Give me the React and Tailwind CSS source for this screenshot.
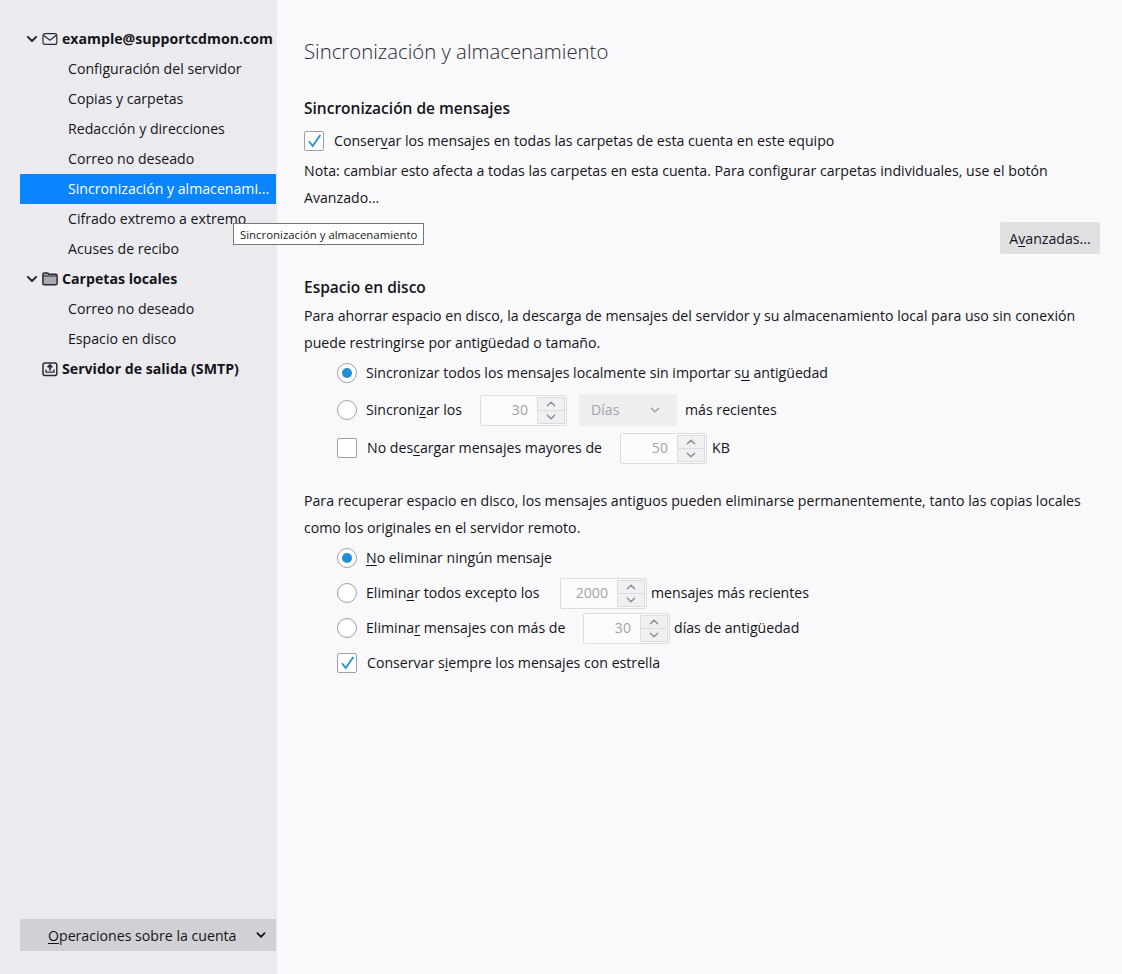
import React from "react";

const U = ({ children }) => <span className="underline underline-offset-2 decoration-1">{children}</span>;

function Chevron({ className = "", sw = 1.7 }) {
  return (
    <svg width="12" height="12" viewBox="0 0 12 12" fill="none" className={className}>
      <path d="M2 4l4 4 4-4" stroke="currentColor" strokeWidth={sw} strokeLinecap="round" strokeLinejoin="round" />
    </svg>
  );
}

function Mail() {
  return (
    <svg width="16" height="16" viewBox="0 0 16 16" fill="none" stroke="#2b2a33" strokeWidth="1.2">
      <rect x="1" y="2.6" width="13.8" height="10.8" rx="2" />
      <path d="M1.5 4.2l6.4 5 6.4-5" />
    </svg>
  );
}

function Folder() {
  return (
    <svg width="16" height="16" viewBox="0 0 16 16">
      <path d="M.9 3.2c0-.7.5-1.2 1.2-1.2h3.6l1.2 1.3h6.9c.7 0 1.3.6 1.3 1.3v7.9c0 .7-.6 1.3-1.3 1.3H2.2c-.7 0-1.3-.6-1.3-1.3z" fill="#a9a9ae" stroke="#2b2a33" strokeWidth="1.5" />
      <path d="M1.5 5h13" stroke="#2b2a33" strokeWidth="1" />
    </svg>
  );
}

function Outbox() {
  return (
    <svg width="16" height="16" viewBox="0 0 16 16" fill="none" stroke="#2b2a33">
      <rect x="1" y="2" width="13.8" height="12.4" rx="1.8" strokeWidth="1.5" />
      <path d="M4 8.5v2.6h8V8.5" strokeWidth="1.3" />
      <path d="M8 9.5V4.2M5.6 6.4L8 4l2.4 2.4" strokeWidth="1.7" />
    </svg>
  );
}

function Head({ icon, chevron, children }) {
  return (
    <div className="h-[30px] flex items-center pl-[6px]">
      <span className="w-[12px] shrink-0 flex justify-center text-[#2b2a33]">{chevron && <Chevron sw={2} />}</span>
      <span className="ml-[4px] w-[20px] shrink-0 flex">{icon}</span>
      <span className="font-bold whitespace-nowrap">{children}</span>
    </div>
  );
}

function Item({ children, selected }) {
  return (
    <div className={"h-[30px] flex items-center pl-[48px] whitespace-nowrap " + (selected ? "bg-[#0a84ff] text-white" : "")}>
      {children}
    </div>
  );
}

function Tick() {
  return (
    <svg width="18" height="18" viewBox="0 0 18 18" fill="none">
      <path d="M4.5 10l3.2 4L14.8 3.8" stroke="#2b91d6" strokeWidth="1.9" strokeLinecap="square" />
    </svg>
  );
}

function Check({ checked }) {
  return (
    <span className="w-[20px] h-[20px] shrink-0 rounded-[2px] border border-[#9f9fa6] bg-white flex items-center justify-center">
      {checked && <Tick />}
    </span>
  );
}

function Radio({ checked }) {
  return (
    <span className="w-[20px] h-[20px] shrink-0 rounded-full border border-[#9f9fa6] bg-white flex items-center justify-center">
      {checked && <span className="w-[10px] h-[10px] rounded-full bg-[#1f8fd6]" />}
    </span>
  );
}

function Spin({ value }) {
  return (
    <span className="w-[87px] h-[31px] border border-[#dcdce0] rounded-[2px] bg-[#fbfbfc] flex items-stretch shrink-0">
      <span className="flex-1 flex items-center justify-end pr-[8px] text-[#a3a3a8]">{value}</span>
      <span className="w-[28px] m-px flex flex-col border border-[#dcdce0] bg-[#f0f0f2] text-[#8f8f96]">
        <span className="flex-1 flex items-center justify-center border-b border-[#dcdce0]">
          <Chevron className="rotate-180 scale-90" />
        </span>
        <span className="flex-1 flex items-center justify-center">
          <Chevron className="scale-90" />
        </span>
      </span>
    </span>
  );
}

function Row({ children, className = "" }) {
  return <div className={"flex items-center whitespace-nowrap " + className}>{children}</div>;
}

export default function App() {
  return (
    <div className="relative w-[1122px] h-[974px] flex overflow-hidden text-[14.15px] text-[#15141a]" style={{ fontFamily: '"Open Sans","Noto Sans",sans-serif' }}>
      <aside className="w-[277px] h-full shrink-0 bg-[#ebebef] pl-[20px] pr-px pt-[24px] pb-[23px] flex flex-col">
        <div className="flex-1">
          <Head chevron icon={<Mail />}>example@supportcdmon.com</Head>
          <Item>Configuración del servidor</Item>
          <Item>Copias y carpetas</Item>
          <Item>Redacción y direcciones</Item>
          <Item>Correo no deseado</Item>
          <Item selected>Sincronización y almacenami...</Item>
          <Item>Cifrado extremo a extremo</Item>
          <Item>Acuses de recibo</Item>
          <Head chevron icon={<Folder />}>Carpetas locales</Head>
          <Item>Correo no deseado</Item>
          <Item>Espacio en disco</Item>
          <Head icon={<Outbox />}>Servidor de salida (SMTP)</Head>
        </div>
        <button className="h-[32px] w-full bg-[#d1d1d5] rounded-l-[2px] flex items-center pl-[28px] pr-[9px] justify-between">
          <span className="pt-px"><U>O</U>peraciones sobre la cuenta</span>
          <Chevron sw={2} className="scale-90" />
        </button>
      </aside>

      <main className="flex-1 bg-[#f9f9fb] pl-[27px] pr-[22px] pt-[35px]">
        <h1 className="text-[20.35px] leading-[32px] font-light text-[#2b2a33]">Sincronización y almacenamiento</h1>

        <h2 className="mt-[29px] text-[15.5px] leading-[24px] font-semibold">Sincronización de mensajes</h2>
        <Row className="mt-[9px] h-[24px]"><Check checked /><span className="ml-[10px]">Conser<U>v</U>ar los mensajes en todas las carpetas de esta cuenta en este equipo</span></Row>
        <p className="mt-[4px] leading-[27px]">Nota: cambiar esto afecta a todas las carpetas en esta cuenta. Para configurar carpetas individuales, use el botón Avanzado...</p>
        <div className="flex justify-end mt-[11px]">
          <button className="w-[100px] h-[32px] pt-px bg-[#e0e0e3] rounded-[2px] flex items-center justify-center">A<U>v</U>anzadas...</button>
        </div>

        <h2 className="mt-[21px] text-[15.5px] leading-[24px] font-semibold">Espacio en disco</h2>
        <p className="mt-[3px] leading-[27px]">Para ahorrar espacio en disco, la descarga de mensajes del servidor y su almacenamiento local para uso sin conexión puede restringirse por antigüedad o tamaño.</p>

        <div className="pl-[33px] mt-[1px]">
          <Row className="h-[32px] mt-[1px]"><Radio checked /><span className="ml-[9px]">Sincronizar todos los mensajes localmente sin importar s<U>u</U> antigüedad</span></Row>
          <Row className="h-[36px] mt-[3px]">
            <Radio /><span className="ml-[9px] w-[114px]">Sincroni<U>z</U>ar los</span>
            <Spin value="30" />
            <span className="ml-[12px] w-[98px] h-[32px] bg-[#eeeef0] rounded-[2px] flex items-center justify-between pl-[12px] pr-[16px] text-[#a3a3a8]">Días <Chevron className="scale-90" /></span>
            <span className="ml-[8px]">más recientes</span>
          </Row>
          <Row className="h-[36px] mt-[2px]">
            <Check /><span className="ml-[10px] w-[253px]">No des<U>c</U>argar mensajes mayores de</span>
            <Spin value="50" />
            <span className="ml-[5px]">KB</span>
          </Row>
        </div>

        <p className="mt-[21px] leading-[27px]">Para recuperar espacio en disco, los mensajes antiguos pueden eliminarse permanentemente, tanto las copias locales como los originales en el servidor remoto.</p>

        <div className="pl-[33px] mt-[1px]">
          <Row className="h-[32px] mt-[1px]"><Radio checked /><span className="ml-[9px]"><U>N</U>o eliminar ningún mensaje</span></Row>
          <Row className="h-[34px] mt-[2px]">
            <Radio /><span className="ml-[9px] w-[194px]">Elimin<U>a</U>r todos excepto los</span>
            <Spin value="2000" />
            <span className="ml-[4px]">mensajes más recientes</span>
          </Row>
          <Row className="h-[34px] mt-[1px]">
            <Radio /><span className="ml-[9px] w-[217px]">Elimina<U>r</U> mensajes con más de</span>
            <Spin value="30" />
            <span className="ml-[4px]">días de antigüedad</span>
          </Row>
          <Row className="h-[34px] mt-[1px]"><Check checked /><span className="ml-[10px]">Conservar s<U>i</U>empre los mensajes con estrella</span></Row>
        </div>
      </main>

      <div className="absolute left-[233px] top-[223px] h-[22px] px-[6px] pt-[2px] flex items-center bg-white border border-[#767676] text-[11.4px] text-[#1a1a1a] whitespace-nowrap">
        Sincronización y almacenamiento
      </div>
    </div>
  );
}
